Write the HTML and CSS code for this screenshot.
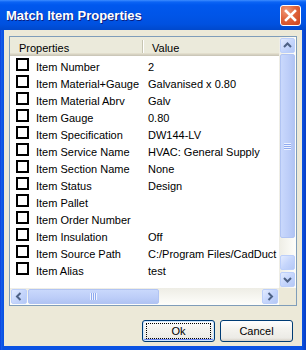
FILE: index.html
```html
<!DOCTYPE html>
<html lang="en">
<head>
  <meta charset="UTF-8">
  <title>Match Item Properties</title>
  <link rel="stylesheet" href="styles.css">
</head>
<body>
  <div class="xp-window">
    <div class="xp-titlebar">
      <span class="xp-title">Match Item Properties</span>
      <button class="xp-close" type="button">
        <svg width="13" height="13" viewBox="0 0 13 13"><path d="M2 2 L11 11 M11 2 L2 11" stroke="#fff" stroke-width="2.6" stroke-linecap="square"/></svg>
      </button>
    </div>

    <div class="xp-client">
      <div class="match-list">
        <div class="match-list-body">
          <div class="match-list-header">
            <div class="match-col-prop">Properties</div>
            <div class="match-col-divider"></div>
            <div class="match-col-val">Value</div>
          </div>
          <div class="match-row"><div class="match-cell-prop"><span class="match-check"></span><span class="match-text">Item Number</span></div><div class="match-cell-val">2</div></div>
          <div class="match-row"><div class="match-cell-prop"><span class="match-check"></span><span class="match-text">Item Material+Gauge</span></div><div class="match-cell-val">Galvanised x 0.80</div></div>
          <div class="match-row"><div class="match-cell-prop"><span class="match-check"></span><span class="match-text">Item Material Abrv</span></div><div class="match-cell-val">Galv</div></div>
          <div class="match-row"><div class="match-cell-prop"><span class="match-check"></span><span class="match-text">Item Gauge</span></div><div class="match-cell-val">0.80</div></div>
          <div class="match-row"><div class="match-cell-prop"><span class="match-check"></span><span class="match-text">Item Specification</span></div><div class="match-cell-val">DW144-LV</div></div>
          <div class="match-row"><div class="match-cell-prop"><span class="match-check"></span><span class="match-text">Item Service Name</span></div><div class="match-cell-val">HVAC: General Supply</div></div>
          <div class="match-row"><div class="match-cell-prop"><span class="match-check"></span><span class="match-text">Item Section Name</span></div><div class="match-cell-val">None</div></div>
          <div class="match-row"><div class="match-cell-prop"><span class="match-check"></span><span class="match-text">Item Status</span></div><div class="match-cell-val">Design</div></div>
          <div class="match-row"><div class="match-cell-prop"><span class="match-check"></span><span class="match-text">Item Pallet</span></div><div class="match-cell-val"></div></div>
          <div class="match-row"><div class="match-cell-prop"><span class="match-check"></span><span class="match-text">Item Order Number</span></div><div class="match-cell-val"></div></div>
          <div class="match-row"><div class="match-cell-prop"><span class="match-check"></span><span class="match-text">Item Insulation</span></div><div class="match-cell-val">Off</div></div>
          <div class="match-row"><div class="match-cell-prop"><span class="match-check"></span><span class="match-text">Item Source Path</span></div><div class="match-cell-val">C:/Program Files/CadDuct Suite</div></div>
          <div class="match-row"><div class="match-cell-prop"><span class="match-check"></span><span class="match-text">Item Alias</span></div><div class="match-cell-val">test</div></div>
        </div>

        <div class="xp-vscroll">
          <div class="xp-sb-btn">
            <svg width="15" height="15" viewBox="0 0 15 15"><path d="M4 9 L7.5 5.5 L11 9" fill="none" stroke="#4d6185" stroke-width="2"/></svg>
          </div>
          <div class="xp-thumb-v"><div class="xp-grip-v"></div></div>
          <div class="xp-track"></div>
          <div class="xp-sb-btn xp-sb-blank"></div>
          <div class="xp-sb-btn">
            <svg width="15" height="15" viewBox="0 0 15 15"><path d="M4 6 L7.5 9.5 L11 6" fill="none" stroke="#4d6185" stroke-width="2"/></svg>
          </div>
        </div>

        <div class="xp-hscroll">
          <div class="xp-sb-btn xp-sb-wide">
            <svg width="16" height="15" viewBox="0 0 16 15"><path d="M9.5 4 L6 7.5 L9.5 11" fill="none" stroke="#4d6185" stroke-width="2"/></svg>
          </div>
          <div class="xp-thumb-h"><div class="xp-grip-h"></div></div>
          <div class="xp-track"></div>
          <div class="xp-sb-btn xp-sb-wide">
            <svg width="16" height="15" viewBox="0 0 16 15"><path d="M6.5 4 L10 7.5 L6.5 11" fill="none" stroke="#4d6185" stroke-width="2"/></svg>
          </div>
        </div>
        <div class="xp-corner"></div>
      </div>

      <div class="xp-buttons">
        <button class="xp-button xp-button-default" type="button"><span class="xp-focus">Ok</span></button>
        <button class="xp-button" type="button">Cancel</button>
      </div>
    </div>
  </div>
</body>
</html>
```

FILE: styles.css
```css
body {
  margin: 0;
  padding: 0;
  font-family: 'Liberation Sans', Arial, sans-serif;
  font-size: 11px;
  color: #000;
  background: #0a4fdf;
}
.xp-window {
  width: 306px;
  height: 350px;
  display: flex;
  flex-direction: column;
  background: linear-gradient(to right, #0831d9 0, #1660ea 1px, #0a52e3 3px, #0a52e3 302px, #0841c8 305px);
  overflow: hidden;
}
.xp-titlebar {
  height: 30px;
  flex: none;
  display: flex;
  align-items: flex-start;
  padding-left: 6px;
  background: linear-gradient(to bottom, #3d8dff 0, #0b64f5 2px, #0058ee 5px, #0055e8 50%, #0051e0 80%, #0048cc 100%);
}
.xp-title {
  flex: 1;
  margin-top: 8px;
  font-size: 13px;
  font-weight: bold;
  line-height: 16px;
  color: #fff;
  text-shadow: 1px 1px #0a1e80;
}
.xp-close {
  width: 21px;
  height: 21px;
  margin: 5px 5px 0 0;
  padding: 0;
  border: 1px solid #fff;
  border-radius: 3px;
  background: radial-gradient(circle at 30% 25%, #f19a7a 0, #e0643b 45%, #c9421c 100%);
  display: flex;
  align-items: center;
  justify-content: center;
}
.xp-client {
  flex: 1;
  margin: 0 4px 4px;
  background: #ece9d8;
  padding: 6px 5px 0;
}
.match-list {
  width: 288px;
  height: 270px;
  box-sizing: border-box;
  border: 1px solid #7f9db9;
  background: #fff;
  display: grid;
  grid-template-columns: 269px 17px;
  grid-template-rows: 251px 17px;
}
.match-list-body {
  overflow: hidden;
  white-space: nowrap;
}
.match-list-header {
  height: 19px;
  display: flex;
  background: #ebeadb;
  box-shadow: inset 0 -1px #cbc7b8, inset 0 -2px #d6d2c2, inset 0 -3px #e2decd;
}
.match-col-prop {
  width: 123px;
  padding: 4px 0 0 9px;
  line-height: 14px;
}
.match-col-divider {
  width: 0;
  height: 13px;
  margin-top: 3px;
  border-left: 1px solid #c7c5b2;
  border-right: 1px solid #fff;
}
.match-col-val {
  padding: 4px 0 0 8px;
  line-height: 14px;
}
.match-row {
  height: 17px;
  display: flex;
  align-items: flex-start;
}
.match-cell-prop {
  width: 132px;
  flex: none;
  display: flex;
  align-items: flex-start;
}
.match-check {
  width: 13px;
  height: 13px;
  box-sizing: border-box;
  margin: 2px 0 0 6px;
  border: 2px solid #000;
  background: #fff;
  flex: none;
}
.match-text {
  margin-left: 7px;
  padding-top: 4px;
  line-height: 14px;
}
.match-cell-val {
  padding: 4px 0 0 6px;
  line-height: 14px;
}
.xp-vscroll {
  grid-row: 1 / 2;
  grid-column: 2 / 3;
  display: flex;
  flex-direction: column;
  padding: 1px;
  background: linear-gradient(to right, #eeede5, #fefefb);
}
.xp-hscroll {
  display: flex;
  padding: 1px;
  background: linear-gradient(to bottom, #eeede5, #fefefb);
}
.xp-corner {
  background: #ece9d8;
}
.xp-sb-btn {
  width: 15px;
  height: 15px;
  flex: none;
  box-sizing: border-box;
  border: 1px solid #bccffa;
  border-radius: 2px;
  background: linear-gradient(135deg, #e3ebfe 0, #c6d6fc 50%, #b4c8f6 100%);
  display: flex;
  align-items: center;
  justify-content: center;
}
.xp-sb-btn svg {
  flex: none;
}
.xp-sb-wide {
  width: 16px;
}
.xp-sb-blank {
  margin-bottom: 2px;
}
.xp-thumb-v {
  height: 184px;
  margin-top: 1px;
  flex: none;
  box-sizing: border-box;
  border: 1px solid #b1c4f3;
  border-radius: 2px;
  background: linear-gradient(to right, #c9d8fc, #bccdf8 60%, #b1c4f3);
  display: flex;
  align-items: center;
  justify-content: center;
}
.xp-grip-v {
  width: 7px;
  height: 7px;
  background: repeating-linear-gradient(to bottom, #eef3fe 0, #eef3fe 1px, #8faaf0 1px, #8faaf0 2px);
}
.xp-thumb-h {
  width: 131px;
  margin-left: 1px;
  flex: none;
  box-sizing: border-box;
  border: 1px solid #b1c4f3;
  border-radius: 2px;
  background: linear-gradient(to bottom, #c9d8fc, #bccdf8 60%, #b1c4f3);
  display: flex;
  align-items: center;
  justify-content: center;
}
.xp-grip-h {
  width: 7px;
  height: 7px;
  background: repeating-linear-gradient(to right, #eef3fe 0, #eef3fe 1px, #8faaf0 1px, #8faaf0 2px);
}
.xp-track {
  flex: 1;
}
.xp-buttons {
  display: flex;
  justify-content: flex-end;
  gap: 5px;
  margin-top: 14px;
  padding-right: 4px;
}
.xp-button {
  width: 73px;
  height: 22px;
  padding: 0;
  border: 1px solid #003c74;
  border-radius: 3px;
  background: linear-gradient(to bottom, #ffffff 0, #f4f3ee 40%, #ecebe6 85%, #d6d0c5 100%);
  font-family: 'Liberation Sans', Arial, sans-serif;
  font-size: 11px;
  color: #000;
  display: flex;
  align-items: center;
  justify-content: center;
}
.xp-button-default {
  box-shadow: inset 0 0 0 1px #cee7ff, inset 0 -1px 0 1px #6982ee;
}
.xp-focus {
  width: 63px;
  height: 14px;
  line-height: 14px;
  border: 1px dotted #000;
  text-align: center;
}
```
